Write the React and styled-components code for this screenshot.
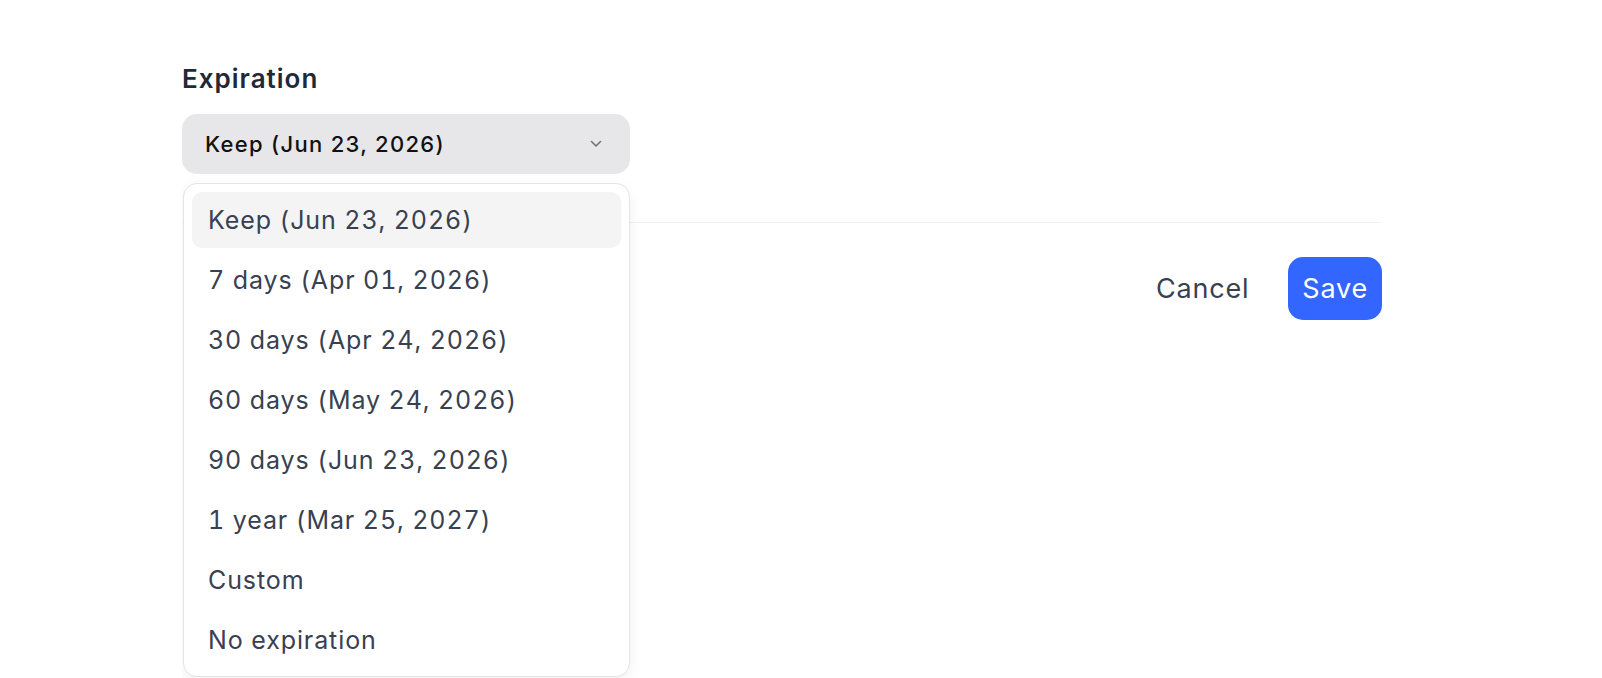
import React from 'react';
import styled, { createGlobalStyle } from 'styled-components';

const options = [
    'Keep (Jun 23, 2026)',
    '7 days (Apr 01, 2026)',
    '30 days (Apr 24, 2026)',
    '60 days (May 24, 2026)',
    '90 days (Jun 23, 2026)',
    '1 year (Mar 25, 2027)',
    'Custom',
    'No expiration',
];

const App = () => {
    return (
        <>
            <GlobalStyle />
            <Page>
                <Field>
                    <Label>Expiration</Label>
                    <SelectWrap>
                        <Trigger>
                            <span>Keep (Jun 23, 2026)</span>
                            <svg width="12" height="8" viewBox="0 0 12 8" fill="none">
                                <path d="M1.5 1.5L6 6L10.5 1.5" stroke="#6b7280" strokeWidth="1.6" strokeLinecap="round" strokeLinejoin="round" />
                            </svg>
                        </Trigger>
                        <Menu>
                            {options.map((o, i) => (
                                <Item key={o} active={i === 0}>{o}</Item>
                            ))}
                        </Menu>
                    </SelectWrap>
                </Field>

                <Divider />

                <Actions>
                    <Button>Cancel</Button>
                    <Button primary>Save</Button>
                </Actions>
            </Page>
        </>
    );
};

export default App;



const GlobalStyle = createGlobalStyle`
    body{
        margin: 0;
        background: #ffffff;
        font-family: Inter, "Noto Sans", sans-serif;
    }
`;

const Page = styled.div`
    width: 1200px;
    margin-left: 182px;
    padding-top: 61px;
    height: 678px;
    box-sizing: border-box;
    overflow: hidden;
`;

const Field = styled.div`
    display: flex;
    flex-direction: column;
`;

const Label = styled.label`
    font-size: 26px;
    font-weight: 600;
    line-height: 36px;
    letter-spacing: 1px;
    color: #1f2937;
    margin-bottom: 17px;
`;

const SelectWrap = styled.div`
    position: relative;
    width: 448px;
`;

const Trigger = styled.div`
    height: 60px;
    box-sizing: border-box;
    border-radius: 15px;
    background: #e7e7ea;
    display: flex;
    align-items: center;
    justify-content: space-between;
    padding: 0 28px 0 23px;
    font-size: 22px;
    font-weight: 500;
    letter-spacing: 1.3px;
    color: #111111;
`;

const Menu = styled.div`
    position: absolute;
    top: calc(100% + 9px);
    left: 1px;
    width: 447px;
    box-sizing: border-box;
    background: #ffffff;
    border: 1px solid #e4e4e7;
    border-radius: 14px;
    box-shadow: 0 4px 14px rgba(0, 0, 0, 0.06);
    padding: 8px;
    display: flex;
    flex-direction: column;
    gap: 4px;
    z-index: 2;
`;

const Item = styled.div`
    height: 56px;
    display: flex;
    align-items: center;
    padding: 0 16px;
    border-radius: 10px;
    font-size: 25px;
    letter-spacing: 0.9px;
    font-variant-numeric: tabular-nums;
    color: #374151;
    background: ${p => p.active ? '#f4f4f5' : 'transparent'};
`;

const Divider = styled.div`
    height: 1px;
    background: #f0f0f1;
    margin-top: 48px;
`;

const Actions = styled.div`
    display: flex;
    justify-content: flex-end;
    gap: 24px;
    margin-top: 34px;
`;

const Button = styled.button`
    height: 63px;
    padding: 0 ${p => p.primary ? '14px' : '15px'};
    border: none;
    border-radius: 15px;
    font-family: Inter, "Noto Sans", sans-serif;
    font-size: 27px;
    font-weight: 400;
    letter-spacing: 0.8px;
    background: ${p => p.primary ? '#3366ff' : 'transparent'};
    color: ${p => p.primary ? '#ffffff' : '#374151'};
`;
